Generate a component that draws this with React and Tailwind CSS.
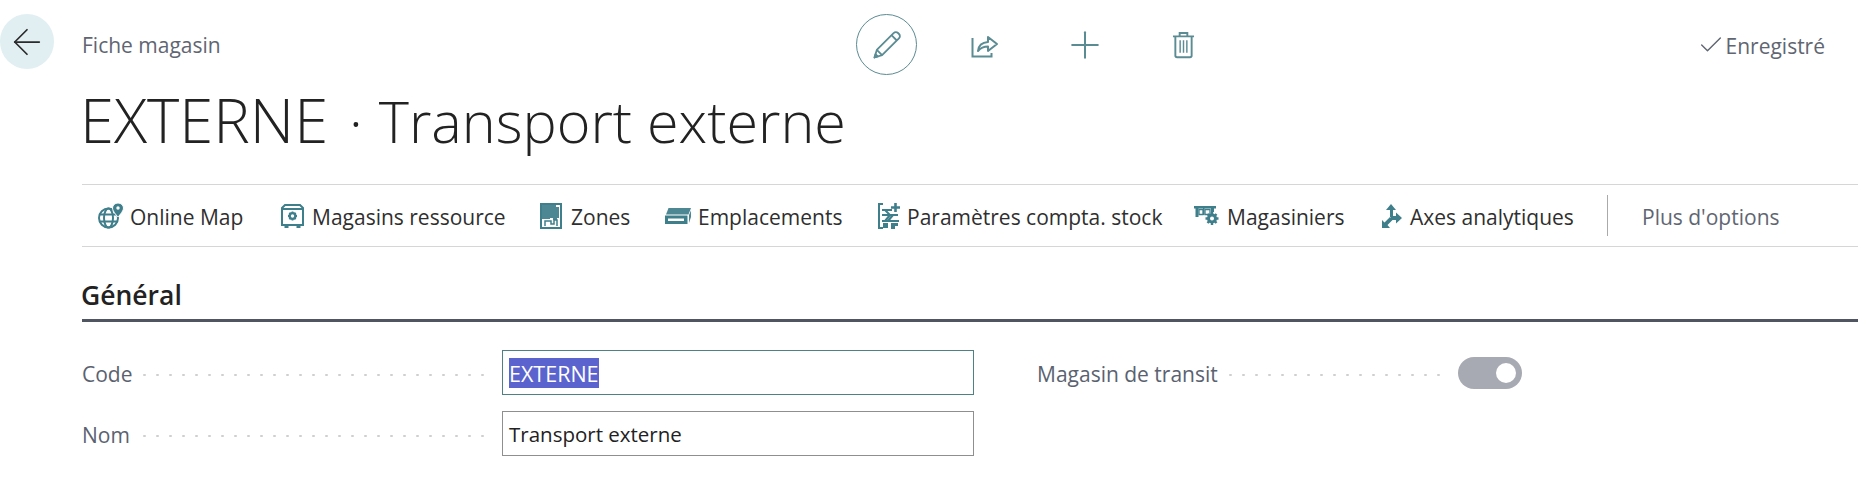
import { ArrowLeft, Check, Plus } from 'lucide-react'

const font = 'font-["Open_Sans","Noto_Sans",sans-serif]'

const PencilIcon = () => (
  <svg width="30" height="30" viewBox="0 0 30 30" fill="none" stroke="#5b8b93" strokeWidth="1.8" strokeLinejoin="round">
    <path d="M2.500 27.500l2.300-7.600L21.600 3.100c1.300-1.300 3.200-1.300 4.400-.1l1 1c1.200 1.200 1.200 3.100-.1 4.400L10.100 25.200z" />
    <path d="M4.800 19.900l5.300 5.300M19.500 5.200l5.300 5.300" />
    <path d="M2.500 27.500l1-3.300 2.300 2.300z" fill="#5b8b93" />
  </svg>
)

const ShareIcon = () => (
  <svg width="28" height="26" viewBox="0 0 28 26" fill="none" stroke="#5b8b93" strokeWidth="2">
    <path d="M1.500 6v18.500h19V21" />
    <path d="M7 19c.5-5 3.500-8.500 10-9V5l9 7-9 7v-4.500c-4 0-7.500 1.500-10 4.500z" strokeLinejoin="round" />
  </svg>
)

const TrashIcon = () => (
  <svg width="23" height="28" viewBox="0 0 24 28" fill="none" stroke="#5b8b93" strokeWidth="2">
    <path d="M1 5h22M8 5V1.500h8V5" />
    <path d="M3.500 5v20c0 1 .7 1.800 1.800 1.800h13.400c1.100 0 1.800-.8 1.800-1.800V5" />
    <path d="M8.500 9v13M12 9v13M15.500 9v13" strokeWidth="1.500" />
  </svg>
)

const GlobeMapIcon = () => (
  <svg width="26" height="26" viewBox="0 0 26 26" fill="none" stroke="#3f7f8b" strokeWidth="2">
    <circle cx="10.500" cy="15" r="9.500" />
    <ellipse cx="10.500" cy="15" rx="4.500" ry="9.500" />
    <path d="M1.500 11.500h18M1.500 18.500h18" />
    <path d="M20 0c-3 0-5.500 2.200-5.500 5 0 3.500 5.500 9 5.500 9s5.500-5.500 5.500-9C25.500 2.200 23 0 20 0z" fill="#3f7f8b" stroke="#fff" strokeWidth="1" />
    <circle cx="20" cy="5" r="1.700" fill="#fff" stroke="none" />
  </svg>
)

const SafeIcon = () => (
  <svg width="23" height="24" viewBox="0 0 23 24" fill="none" stroke="#3f7f8b" strokeWidth="2">
    <path d="M4 1h15l3 3v17H1V4z" />
    <path d="M1 5h21M3.500 23h4M15.500 23h4" />
    <path d="M11.500 7.500v9M7 12h9M8.300 8.800l6.400 6.400M14.700 8.800l-6.400 6.400" strokeWidth="1.800" />
    <circle cx="11.500" cy="12" r="4" fill="#3f7f8b" stroke="none" />
    <circle cx="11.500" cy="12" r="1.700" fill="#fff" stroke="none" />
  </svg>
)

const ZonesIcon = () => (
  <svg width="22" height="26" viewBox="0 0 22 26">
    <rect x="1" y="1" width="20" height="24" fill="none" stroke="#3f7f8b" strokeWidth="2" />
    <path d="M2 2h14v2h3v11h-2v2h-4v-2h-3v1H2z" fill="#4d8794" />
    <path d="M5 23v-5h6v3h3v-4h3v6" fill="none" stroke="#3f7f8b" strokeWidth="1.500" />
  </svg>
)

const BinIcon = () => (
  <svg width="26" height="16" viewBox="0 0 26 16" fill="none">
    <path d="M3.500 0H26l-2.500 6.500H1z" fill="#4d8794" />
    <path d="M0 7.500h22.500V16H0z" fill="#3f7f8b" />
    <path d="M3 10.500h16V13H3z" fill="#fff" />
    <path d="M24 7l2-4.500V9l-2 6z" fill="#4d8794" />
  </svg>
)

const PostingIcon = () => (
  <svg width="23" height="26" viewBox="0 0 23 26" fill="none" stroke="#3f7f8b" strokeWidth="2">
    <path d="M5 1H1v24h4" />
    <path d="M4 7h10M4 12h16M4 18h17M7 7l5 5-5 6M15 12l-5 6" />
    <path d="M17.500 0v9M13 4.500h9" strokeWidth="2.600" />
    <path d="M5 20h5v5H5zM13 20h7v3h-3v3h-4z" fill="#3f7f8b" stroke="none" />
  </svg>
)

const TruckGearIcon = () => (
  <svg width="26" height="20" viewBox="0 0 26 20" fill="none">
    <path d="M0 0h22v2.500H0zM1.500 2.500h3V11h-3zM17 2.500h3V6h-3zM9 2.500h1.500V9H9z" fill="#3f7f8b" />
    <path d="M5 3.500h4v5H5zM11 3.500h5v5h-5z" stroke="#3f7f8b" strokeWidth="1.300" />
    <circle cx="18" cy="12.500" r="3.500" stroke="#3f7f8b" strokeWidth="3" />
    <path d="M18 6v2.500M18 16.500V19M11.500 12.500H14M22 12.500h2.500M13.500 8l1.800 1.800M20.700 15.200l1.800 1.800M22.500 8l-1.800 1.800M15.300 15.200L13.500 17" stroke="#3f7f8b" strokeWidth="2.400" />
  </svg>
)

const AxesIcon = () => (
  <svg width="20" height="24" viewBox="0 0 20 24" fill="none">
    <path d="M9 0l5 6h-3v7H8V6H4z" fill="#3f7f8b" />
    <path d="M20 14l-6 5.500V16H9v-4h5V8.500z" fill="#3f7f8b" />
    <path d="M0 24v-8l2.500 2.500L8 13l3 2.500-5.500 5.500L8 24z" fill="#3f7f8b" />
  </svg>
)

const actions = [
  { label: 'Online Map', icon: GlobeMapIcon, w: 'w-[183px]', g: 'w-[32px]' },
  { label: 'Magasins ressource', icon: SafeIcon, w: 'w-[259px]', g: 'w-[31px]' },
  { label: 'Zones', icon: ZonesIcon, w: 'w-[125px]', g: 'w-[31px]' },
  { label: 'Emplacements', icon: BinIcon, w: 'w-[213px]', g: 'w-[33px]' },
  { label: 'Paramètres compta. stock', icon: PostingIcon, w: 'w-[316px]', g: 'w-[29px]' },
  { label: 'Magasiniers', icon: TruckGearIcon, w: 'w-[188px]', g: 'w-[33px]' },
  { label: 'Axes analytiques', icon: AxesIcon, w: 'w-[225px]', g: 'w-[28px]' },
]

const Dots = () => (
  <div className="h-1 flex-1 mt-[4px] bg-[radial-gradient(circle,#cfcfcf_1px,transparent_1.5px)] bg-[length:13px_4px] bg-repeat-x" />
)

export default function App() {
  return (
    <div className={`${font} h-[498px] w-[1858px] overflow-hidden bg-white flex`}>
      <div className="w-[82px] shrink-0 pt-[14px]">
        <button className="w-[54px] h-[55px] rounded-full bg-[#e1eff3] flex items-center justify-center text-[#2b2b2b]">
          <ArrowLeft size={42} strokeWidth={1} />
        </button>
      </div>

      <div className="flex-1 min-w-0">
        <div className="flex items-center h-[61px] mt-[14px]">
          <span className="w-[774px] shrink-0 pt-[2px] text-[21px] text-[#5f6672]">Fiche magasin</span>
          <button className="w-[61px] h-[61px] rounded-full border border-[#5b8b93] flex items-center justify-center">
            <PencilIcon />
          </button>
          <div className="w-[68px] flex justify-center ml-[34px]"><ShareIcon /></div>
          <div className="w-[44px] flex justify-center ml-[44px] text-[#5b8b93]"><Plus size={44} strokeWidth={1.1} /></div>
          <div className="w-[32px] flex justify-center ml-[60px]"><TrashIcon /></div>
          <div className="ml-auto mr-[33px] flex items-center text-[21px] text-[#5f6672] gap-[1px]">
            <Check size={28} strokeWidth={1.200} />
            <span className="pt-[4px]">Enregistré</span>
          </div>
        </div>

        <h1 className="h-[80px] text-[57.500px] font-light leading-[80px] mt-[4px] ml-[-2px] text-[#222] whitespace-nowrap">
          <span className="text-[61.500px]">EXTERNE</span>
          <span className="ml-[21px] mr-[16px]">·</span>
          <span>Transport externe</span>
        </h1>

        <div className="mt-[25px] h-[63px] border-y border-[#d6d6d6] flex items-center pl-[16px] text-[21px] text-[#2f2f2f]">
          {actions.map((a) => (
            <div key={a.label} className={`${a.w} flex items-center shrink-0`}>
              <span className={`${a.g} shrink-0 flex`}><a.icon /></span>
              <span className="whitespace-nowrap pt-[4px]">{a.label}</span>
            </div>
          ))}
          <div className="w-px h-[41px] bg-[#aaaaaa]" />
          <span className="ml-[34px] pt-[4px] text-[#5f6672] whitespace-nowrap">Plus d'options</span>
        </div>

        <h2 className="text-[26.500px] font-semibold text-[#222] mt-[32px] ml-[-1px] leading-8">Général</h2>
        <div className="h-[3px] bg-[#4f5662] mt-[8px]" />

        <div className="mt-[28px] flex items-start">
          <div className="w-[892px] flex flex-col gap-[16px]">
            <div className="flex h-[45px] items-center">
              <span className="w-[56px] shrink-0 pt-[4px] text-[21px] text-[#5a6270]">Code</span>
              <Dots />
              <div className="w-[472px] ml-[12px] h-[45px] border border-[#4f8084] flex items-center pl-[6px] text-[21.500px]">
                <span className="bg-[#5b63cf] text-white h-[30px] pt-[3px] flex items-center">EXTERNE</span>
              </div>
            </div>
            <div className="flex h-[45px] items-center">
              <span className="w-[56px] shrink-0 pt-[4px] text-[21px] text-[#5a6270]">Nom</span>
              <Dots />
              <div className="w-[472px] ml-[12px] h-[45px] border border-[#8f8f8f] flex items-center pl-[6px] pt-[2px] text-[20.500px] text-[#222]">
                Transport externe
              </div>
            </div>
          </div>
          <div className="w-[485px] ml-[63px] h-[45px] flex items-center">
            <span className="text-[21px] pt-[4px] text-[#5a6270] mr-[6px]">Magasin de transit</span>
            <Dots />
            <div className="w-16 h-8 ml-4 rounded-full bg-[#a7aab2] flex items-center justify-end pr-[6px]">
              <div className="w-5 h-5 rounded-full bg-white" />
            </div>
          </div>
        </div>
      </div>
    </div>
  )
}
